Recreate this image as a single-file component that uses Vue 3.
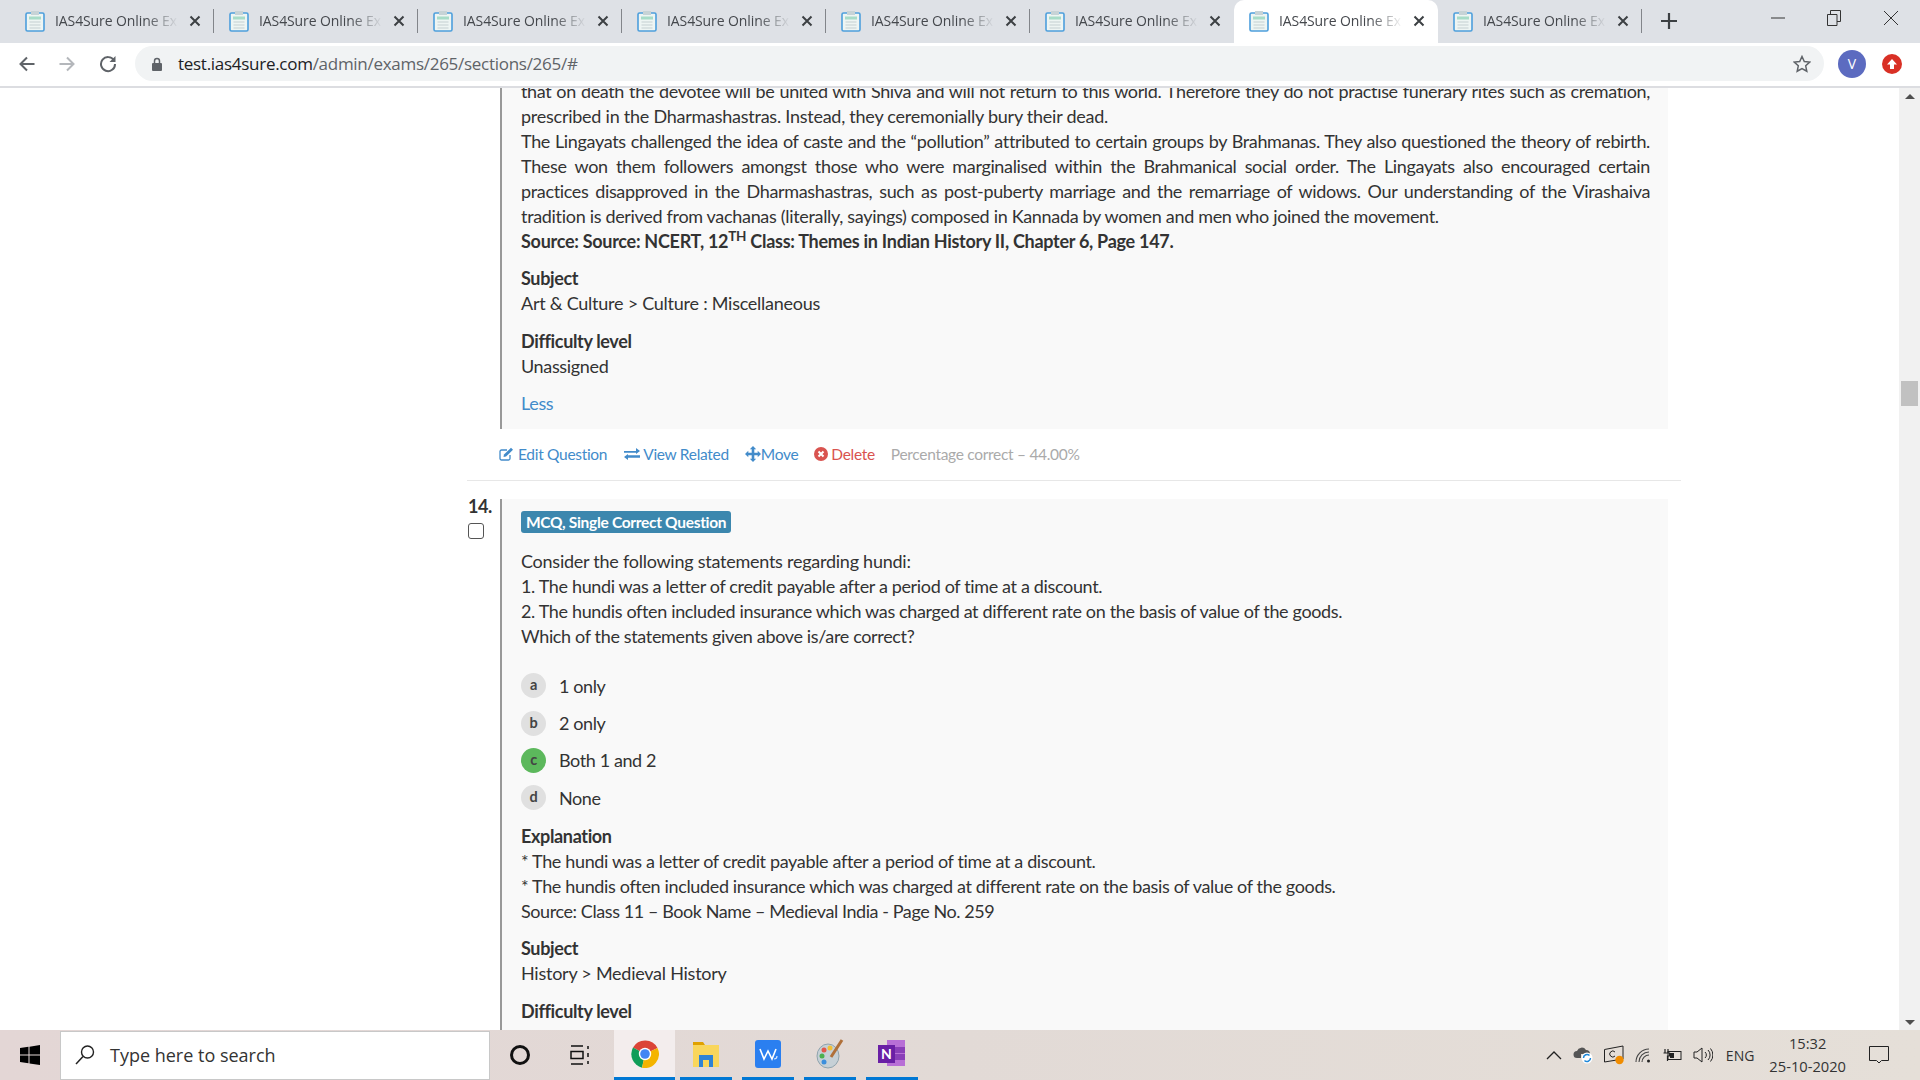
<script setup>
const tabs = Array.from({ length: 8 }, (_, i) => ({ id: i, active: i === 6, sep: i !== 5 && i !== 6 }))
const options = [
  { k: 'a', t: '1 only' },
  { k: 'b', t: '2 only' },
  { k: 'c', t: 'Both 1 and 2', ok: true },
  { k: 'd', t: 'None' }
]
const apps = ['chrome', 'files', 'wps', 'paint', 'note']
const justified = [
  'that on death the devotee will be united with Shiva and will not return to this world. Therefore they do not practise funerary rites such as cremation,'
]
const second = [
  'The Lingayats challenged the idea of caste and the “pollution” attributed to certain groups by Brahmanas. They also questioned the theory of rebirth.',
  'These won them followers amongst those who were marginalised within the Brahmanical social order. The Lingayats also encouraged certain',
  'practices disapproved in the Dharmashastras, such as post-puberty marriage and the remarriage of widows. Our understanding of the Virashaiva'
]
</script>

<template>
  <div class="screen">
    <header class="tabstrip">
      <div v-for="tab in tabs" :key="tab.id" class="tab" :class="{ active: tab.active, sep: tab.sep }">
        <svg class="favicon" width="20" height="22" viewBox="0 0 20 22">
          <rect x="1" y="3" width="18" height="18" rx="1.500" fill="#eef5f3" stroke="#4d9fdc" stroke-width="1.600" />
          <rect x="6" y="1" width="8" height="4" fill="#c7d3d6" />
          <rect x="4" y="6.500" width="12" height="3" fill="#a8dcc8" />
          <path d="M4.500 12h11M4.500 15h11M4.500 18h11" stroke="#c3cfd2" stroke-width="1.200" />
        </svg>
        <span class="tabtitle">IAS4Sure Online Ex</span>
        <svg class="tabclose" width="12" height="12" viewBox="0 0 12 12"><path d="M1.500 1.500l9 9M10.500 1.500l-9 9" stroke="#3c4043" stroke-width="2" /></svg>
      </div>
      <svg class="newtab" width="16" height="16" viewBox="0 0 16 16"><path d="M8 0v16M0 8h16" stroke="#3c4043" stroke-width="2.200" /></svg>
      <div class="winctl">
        <svg width="14" height="14" viewBox="0 0 14 14"><path d="M0 7h14" stroke="#333" /></svg>
        <svg width="14" height="16" viewBox="0 0 14 16"><path d="M.5 4.500h9.500v11H.5zM3.500 4.500V.5h10v11H10" fill="none" stroke="#333" /></svg>
        <svg width="16" height="16" viewBox="0 0 16 16"><path d="M1 1l14 14M15 1L1 15" stroke="#333" /></svg>
      </div>
    </header>

    <nav class="toolbar">
      <svg class="navbtn" width="16" height="16" viewBox="0 0 16 16"><path d="M15.500 8H1.500M8 1.500L1.500 8 8 14.500" fill="none" stroke="#5f6368" stroke-width="2" /></svg>
      <svg class="navbtn" width="16" height="16" viewBox="0 0 16 16"><path d="M.5 8h14M8 1.500L14.500 8 8 14.500" fill="none" stroke="#b4b7bb" stroke-width="2" /></svg>
      <svg class="navbtn" width="18" height="18" viewBox="0 0 18 18"><path d="M15 5.500A7 7 0 1 0 16 9" fill="none" stroke="#5f6368" stroke-width="2" /><path d="M16.500 1v6h-6z" fill="#5f6368" /></svg>
      <div class="omnibox">
        <svg width="10" height="14" viewBox="0 0 10 14"><path d="M2.500 6V4a2.500 2.500 0 0 1 5 0v2" fill="none" stroke="#5f6368" stroke-width="1.500" /><rect x="0" y="6" width="10" height="8" rx="1" fill="#5f6368" /></svg>
        <span class="url"><b>test.ias4sure.com</b>/admin/exams/265/sections/265/#</span>
        <svg class="star" width="18" height="18" viewBox="0 0 18 18"><path d="M9 1.500l2.300 5 5.400.6-4 3.700 1.100 5.400L9 13.500 4.200 16.200l1.100-5.400-4-3.700 5.400-.6z" fill="none" stroke="#5f6368" stroke-width="1.500" /></svg>
      </div>
      <div class="avatar">V</div>
      <div class="update"><svg width="12" height="12" viewBox="0 0 12 12"><path d="M6 1l5 5.500H8V11H4V6.500H1z" fill="#fff" /></svg></div>
    </nav>

    <div class="viewport">
      <main class="page">
        <div class="question first">
          <div class="numcol"></div>
          <article class="card">
            <p v-for="l in justified" :key="l" class="body line">{{ l }}</p>
            <p class="body wide">prescribed in the Dharmashastras. Instead, they ceremonially bury their dead.</p>
            <p v-for="l in second" :key="l" class="body line">{{ l }}</p>
            <p class="body trad">tradition is derived from vachanas (literally, sayings) composed in Kannada by women and men who joined the movement.</p>
            <p class="body strong">Source: Source: NCERT, 12<sup>TH</sup> Class: Themes in Indian History II, Chapter 6, Page 147.</p>
            <h4 class="label snug">Subject</h4>
            <p class="body wide">Art &amp; Culture &gt; Culture : Miscellaneous</p>
            <h4 class="label">Difficulty level</h4>
            <p class="body">Unassigned</p>
            <a class="less">Less</a>
          </article>
        </div>

        <div class="actions">
          <a class="act"><svg width="15" height="14" viewBox="0 0 15 14"><path d="M11 8v3.500a1.500 1.500 0 0 1-1.500 1.500h-7A1.500 1.500 0 0 1 1 11.500v-7A1.500 1.500 0 0 1 2.500 3H8" fill="none" stroke="#428bca" stroke-width="1.300" /><path d="M5 7.500L12 .8l2 2-7 6.800-2.500.5z" fill="#428bca" /></svg>Edit Question</a>
          <a class="act related"><svg width="16" height="12" viewBox="0 0 16 12"><path d="M0 3h12V0l4 3-4 3V4.700H0zM16 7.300H4V6L0 9l4 3v-2.300h12z" fill="#428bca" /></svg>View Related</a>
          <a class="act tight"><svg width="16" height="16" viewBox="0 0 16 16"><path d="M8 0l3.200 3.300H9.300v3.400h3.400V4.800L16 8l-3.300 3.200V9.300H9.300v3.400h1.900L8 16l-3.200-3.300h1.900V9.300H3.300v1.900L0 8l3.300-3.200v1.900h3.400V3.300H4.800z" fill="#428bca" /></svg>Move</a>
          <a class="act danger"><svg width="14" height="14" viewBox="0 0 14 14"><circle cx="7" cy="7" r="7" fill="#d9534f" /><path d="M4.500 4.500l5 5M9.500 4.500l-5 5" stroke="#fff" stroke-width="2" /></svg>Delete</a>
          <span class="pct">Percentage correct – 44.00%</span>
        </div>

        <div class="question">
          <div class="numcol">
            <span class="num">14.</span>
            <span class="check"></span>
          </div>
          <article class="card tall">
            <span class="badge">MCQ, Single Correct Question</span>
            <p class="body stem wide">Consider the following statements regarding hundi:</p>
            <p class="body">1. The hundi was a letter of credit payable after a period of time at a discount.</p>
            <p class="body">2. The hundis often included insurance which was charged at different rate on the basis of value of the goods.</p>
            <p class="body">Which of the statements given above is/are correct?</p>
            <ul class="opts">
              <li v-for="o in options" :key="o.k" class="opt">
                <span class="letter" :class="{ ok: o.ok }">{{ o.k }}</span>{{ o.t }}
              </li>
            </ul>
            <h4 class="label expl">Explanation</h4>
            <p class="body">* The hundi was a letter of credit payable after a period of time at a discount.</p>
            <p class="body">* The hundis often included insurance which was charged at different rate on the basis of value of the goods.</p>
            <p class="body narrow">Source: Class 11 – Book Name – Medieval India - Page No. 259</p>
            <h4 class="label snug">Subject</h4>
            <p class="body wide">History &gt; Medieval History</p>
            <h4 class="label">Difficulty level</h4>
          </article>
        </div>
      </main>
      <aside class="scrollbar">
        <i class="arrow up"></i>
        <i class="thumb"></i>
        <i class="arrow down"></i>
      </aside>
    </div>

    <footer class="taskbar">
      <svg class="winlogo" width="20" height="20" viewBox="0 0 20 20"><path d="M0 3l8.500-1.200v7.600H0zM9.500 1.700L20 0v9.400H9.500zM0 10.500h8.500v7.700L0 17zM9.500 10.500H20V20L9.500 18.400z" fill="#000" /></svg>
      <div class="search">
        <svg width="20" height="22" viewBox="0 0 20 22"><circle cx="12.500" cy="8" r="6" fill="none" stroke="#222" stroke-width="1.400" /><path d="M8 12.500L1 20" stroke="#222" stroke-width="1.500" /></svg>
        <span>Type here to search</span>
      </div>
      <div class="cortana"></div>
      <svg class="taskview" width="20" height="20" viewBox="0 0 20 20"><path d="M1 6.500h12v7H1zM1 1h12M1 19h12M18 1v3M18 8v4M18 16v3" fill="none" stroke="#111" stroke-width="1.500" /></svg>
      <div class="apps">
        <div v-for="a in apps" :key="a" class="app" :class="a">
          <svg v-if="a === 'chrome'" width="28" height="28" viewBox="0 0 28 28">
            <path d="M14 14L2 7.500A14 14 0 0 1 26.500 8z" fill="#db4437" />
            <path d="M14 14L2 7.500A14 14 0 0 0 11 27.700z" fill="#0f9d58" />
            <path d="M14 14l12.500-6A14 14 0 0 1 11 27.700z" fill="#f4b400" />
            <circle cx="14" cy="14" r="6.200" fill="#fff" /><circle cx="14" cy="14" r="4.800" fill="#4285f4" />
          </svg>
          <svg v-else-if="a === 'files'" width="28" height="28" viewBox="0 0 28 28">
            <path d="M1 2h10l2 3H1z" fill="#e0a100" />
            <rect x="1" y="5" width="26" height="22" fill="#f9d65c" />
            <path d="M7 27V15h14v12h-4v-7h-6v7z" fill="#2f83d6" />
          </svg>
          <svg v-else-if="a === 'wps'" width="28" height="28" viewBox="0 0 28 28">
            <rect x="1" y="0" width="26" height="28" rx="3" fill="#2a7ff0" />
            <path d="M6 9l4 10 4-8 4 8 4-10" fill="none" stroke="#fff" stroke-width="1.600" />
            <path d="M20 19c2 0 3-1 3-3" fill="none" stroke="#cfe2ff" stroke-width="1.200" />
          </svg>
          <svg v-else-if="a === 'paint'" width="30" height="30" viewBox="0 0 30 30">
            <ellipse cx="13" cy="17" rx="11" ry="12" fill="#c6d0d6" stroke="#8fa3ad" />
            <circle cx="9" cy="11" r="2.500" fill="#e2574c" /><circle cx="15" cy="9" r="2.500" fill="#f2c037" /><circle cx="7" cy="17" r="2.500" fill="#4caf50" /><circle cx="9" cy="23" r="2.500" fill="#3d8fdc" />
            <path d="M27 1L16 18" stroke="#b0703a" stroke-width="3" />
          </svg>
          <svg v-else width="30" height="28" viewBox="0 0 30 28">
            <path d="M10 0h18v26H10z" fill="#b86fd6" />
            <path d="M18 7h10v6H18z M18 14h10v6H18z" fill="#8a3fb8" />
            <rect x="1" y="5" width="17" height="18" fill="#6a1fa5" />
            <text x="9.500" y="19" class="onenote">N</text>
          </svg>
        </div>
      </div>
      <div class="tray">
        <svg width="16" height="10" viewBox="0 0 16 10"><path d="M1 9l7-7 7 7" fill="none" stroke="#222" stroke-width="1.300" /></svg>
        <svg width="20" height="18" viewBox="0 0 20 18"><path d="M4 12a3.500 3.500 0 0 1 0-7 5 5 0 0 1 9-1 4 4 0 0 1 4 4H8v4z" fill="#555" /><circle cx="14" cy="12" r="5.500" fill="#fff" /><path d="M10.500 12a3.500 3.500 0 0 1 6-2.500M17.500 12a3.500 3.500 0 0 1-6 2.500" fill="none" stroke="#1e88d9" stroke-width="1.500" /></svg>
        <svg width="20" height="20" viewBox="0 0 20 20"><path d="M.5 4.500L19 1v13L.5 17z" fill="none" stroke="#222" /><path d="M11 7a3 3 0 1 0 0 4" fill="none" stroke="#222" /><circle cx="15.500" cy="15" r="4.200" fill="#f08c00" /></svg>
        <svg width="16" height="16" viewBox="0 0 16 16"><path d="M1 15A13 13 0 0 1 14 2M4 15A10 10 0 0 1 14 5M7 15a7 7 0 0 1 7-7" fill="none" stroke="#444" stroke-width="1.100" /><circle cx="13.500" cy="14" r="1.500" fill="#222" /></svg>
        <svg width="20" height="14" viewBox="0 0 20 14"><path d="M3 1v4M6 1v4M1.500 5h6v3H5.500v5" fill="none" stroke="#222" stroke-width="1.200" /><rect x="6" y="3.500" width="13" height="8" fill="none" stroke="#222" /><rect x="8" y="5" width="4" height="5" fill="#222" /></svg>
        <svg width="20" height="16" viewBox="0 0 20 16"><path d="M1 5h3l5-4v14l-5-4H1z" fill="none" stroke="#222" /><path d="M12 5a4 4 0 0 1 0 6M15 3a7 7 0 0 1 0 10M17.500 1.500a10 10 0 0 1 0 13" fill="none" stroke="#222" /></svg>
        <span class="lang">ENG</span>
        <div class="clock"><span>15:32</span><span>25-10-2020</span></div>
        <svg class="notif" width="20" height="18" viewBox="0 0 20 18"><path d="M.5.500h19v14h-7l-2.500 2.500-2.500-2.500h-7z" fill="none" stroke="#222" /></svg>
      </div>
    </footer>
  </div>
</template>

<style scoped>
.screen { width: 1920px; height: 1080px; display: flex; flex-direction: column; overflow: hidden; background: #fff; font-family: Lato, "Liberation Sans", sans-serif; color: #333; }
.tabstrip { height: 43px; flex: none; background: #dee1e6; display: flex; align-items: center; padding: 0 0 2px 10px; box-sizing: border-box; position: relative; }
.tab { width: 204px; height: 41px; flex: none; display: flex; align-items: center; padding: 0 13px 0 15px; box-sizing: border-box; position: relative; }
.tab.sep::after { content: ""; position: absolute; right: 0; top: 9px; height: 24px; width: 1px; background: #82858a; }
.tab.active { background: #fff; border-radius: 10px 10px 0 0; height: 43px; margin-bottom: -2px; padding-bottom: 2px; }
.favicon { flex: none; margin-right: 10px; }
.tabtitle { flex: 1; overflow: hidden; white-space: nowrap; font: 14px "Open Sans", sans-serif; letter-spacing: -.1px; color: #45484d; -webkit-mask-image: linear-gradient(90deg, #000 72%, transparent 98%); mask-image: linear-gradient(90deg, #000 72%, transparent 98%); }
.tabclose { flex: none; margin-left: 8px; }
.newtab { margin-left: 19px; flex: none; }
.winctl { margin-left: auto; display: flex; align-items: center; gap: 42px; padding-right: 21px; margin-top: -6px; }
.toolbar { height: 45px; flex: none; box-sizing: border-box; background: #fff; border-bottom: 2px solid #dcdde1; display: flex; align-items: center; padding: 0 0 2px 19px; }
.navbtn { flex: none; margin-right: 24px; }
.navbtn:nth-child(3) { margin-right: 19px; }
.omnibox { width: 1689px; height: 35px; margin-left: -1px; flex: none; box-sizing: border-box; border-radius: 18px; background: #f1f3f4; display: flex; align-items: center; padding: 0 13px 0 17px; }
.url { margin-left: 16px; font: 17px "Open Sans", sans-serif; letter-spacing: -.28px; color: #5f6368; }
.url b { font-weight: 400; color: #202124; }
.star { margin-left: auto; }
.avatar { width: 28px; height: 28px; flex: none; margin-left: 14px; border-radius: 50%; background: #5c6bc0; color: #fff; font: 14px "Open Sans", sans-serif; display: flex; align-items: center; justify-content: center; }
.update { width: 20px; height: 20px; flex: none; margin-left: 16px; border-radius: 50%; background: #d93025; display: flex; align-items: center; justify-content: center; }
.viewport { flex: 1; min-height: 0; display: flex; overflow: hidden; position: relative; }
.page { width: 1214px; margin-left: 467px; margin-right: 218px; flex: none; margin-top: -9px; }
.question { display: flex; }
.numcol { width: 33px; flex: none; display: flex; flex-direction: column; }
.num { font-size: 18px; font-weight: 700; line-height: 18px; margin-top: -2px; letter-spacing: -.5px; margin-left: 1px; }
.check { width: 14px; height: 14px; margin: 8px 0 0 1px; border: 1px solid #555; border-radius: 3px; background: #fff; }
.card { width: 1168px; box-sizing: border-box; flex: none; background: #f9f9f9; border-left: 2px solid #999; padding: 0 18px 0 19px; font-size: 18px; }
.body { margin: 0; font-size: 18px; line-height: 25px; letter-spacing: -.35px; }
.line { text-align: justify; text-align-last: justify; }
.strong { font-weight: 700; letter-spacing: -.28px; }
.wide { letter-spacing: -.25px; }
.trad { letter-spacing: -.32px; }
.narrow { letter-spacing: -.42px; }
sup { font-size: 13.500px; line-height: 0; }
.label { margin: 13px 0 0; font-size: 18px; line-height: 25px; font-weight: 700; letter-spacing: -.35px; }
.label.snug { margin-top: 12px; }
.first .card { padding-bottom: 13px; }
.less { display: block; margin-top: 12px; color: #428bca; font-size: 18px; line-height: 25px; letter-spacing: -.35px; }
.actions { display: flex; align-items: center; height: 50px; padding-bottom: 1px; margin-bottom: 18px; border-bottom: 1px solid #e7e7e7; padding-left: 32px; font-size: 15.500px; letter-spacing: -.3px; gap: 16px; box-sizing: content-box; }
.act { display: flex; align-items: center; gap: 4px; color: #428bca; }
.act.related { margin-left: 1px; gap: 3px; }
.act.tight { gap: 0; }
.danger { color: #d9534f; gap: 3px; }
.pct { color: #aaa; }
.badge { display: inline-block; margin-top: 12px; height: 22px; line-height: 22px; padding: 0 5px; background: #3c87ae; color: #fff; font-size: 15.500px; font-weight: 700; border-radius: 3px; letter-spacing: -.3px; }
.stem { margin-top: 16px; }
.opts { list-style: none; margin: 18px 0 0; padding: 0; }
.opt { display: flex; align-items: center; height: 37.400px; font-size: 18px; letter-spacing: -.4px; }
.letter { width: 25px; height: 25px; border-radius: 50%; background: #e0e0e0; margin-right: 13px; font-size: 14.500px; font-weight: 700; display: flex; align-items: center; justify-content: center; color: #444; padding-bottom: 2px; box-sizing: border-box; }
.letter.ok { background: #5cb85c; }
.expl { margin-top: 7px; }
.card.tall { min-height: 560px; }
.scrollbar { position: absolute; right: 0; top: 0; bottom: 0; width: 21px; background: #f1f1f1; }
.thumb { position: absolute; left: 2px; width: 17px; top: 293px; height: 25px; background: #c1c1c1; }
.arrow { position: absolute; left: 6px; border: 5px solid transparent; }
.arrow.up { top: 6px; border-bottom-color: #505050; border-top-width: 0; }
.arrow.down { bottom: 5px; border-top-color: #505050; border-bottom-width: 0; }
.taskbar { height: 50px; flex: none; display: flex; align-items: center; background: linear-gradient(90deg, #e3d6d5, #e2dad6 50%, #e5dfd8); position: relative; z-index: 1; }
.winlogo { margin-left: 20px; flex: none; }
.search { width: 430px; height: 49px; margin-left: 20px; flex: none; box-sizing: border-box; background: #fff; border: 1px solid #c8c8c8; display: flex; align-items: center; padding-left: 14px; gap: 15px; font: 18px "Open Sans", sans-serif; color: #333; }
.cortana { width: 20px; height: 20px; margin-left: 20px; flex: none; box-sizing: border-box; border: 3px solid #111; border-radius: 50%; }
.taskview { margin-left: 40px; flex: none; }
.apps { display: flex; margin-left: 24px; height: 50px; }
.app { width: 52px; margin-right: 10px; height: 50px; box-sizing: border-box; border-bottom: 3px solid #0078d4; display: flex; align-items: center; justify-content: center; }
.app.chrome { width: 61px; margin-right: 5px; background: #f3eded; }
.onenote { font: 700 14px Lato, sans-serif; fill: #fff; text-anchor: middle; }
.tray { margin-left: auto; display: flex; align-items: center; gap: 11px; padding-right: 31px; }
.lang { font: 14px "Open Sans", sans-serif; margin-left: 2px; }
.clock { display: flex; flex-direction: column; align-items: center; font: 14.700px/23px "Open Sans", sans-serif; margin-left: 4px; }
.notif { margin-left: 12px; }
</style>

<style>
html, body { margin: 0; overflow: hidden; }
</style>
